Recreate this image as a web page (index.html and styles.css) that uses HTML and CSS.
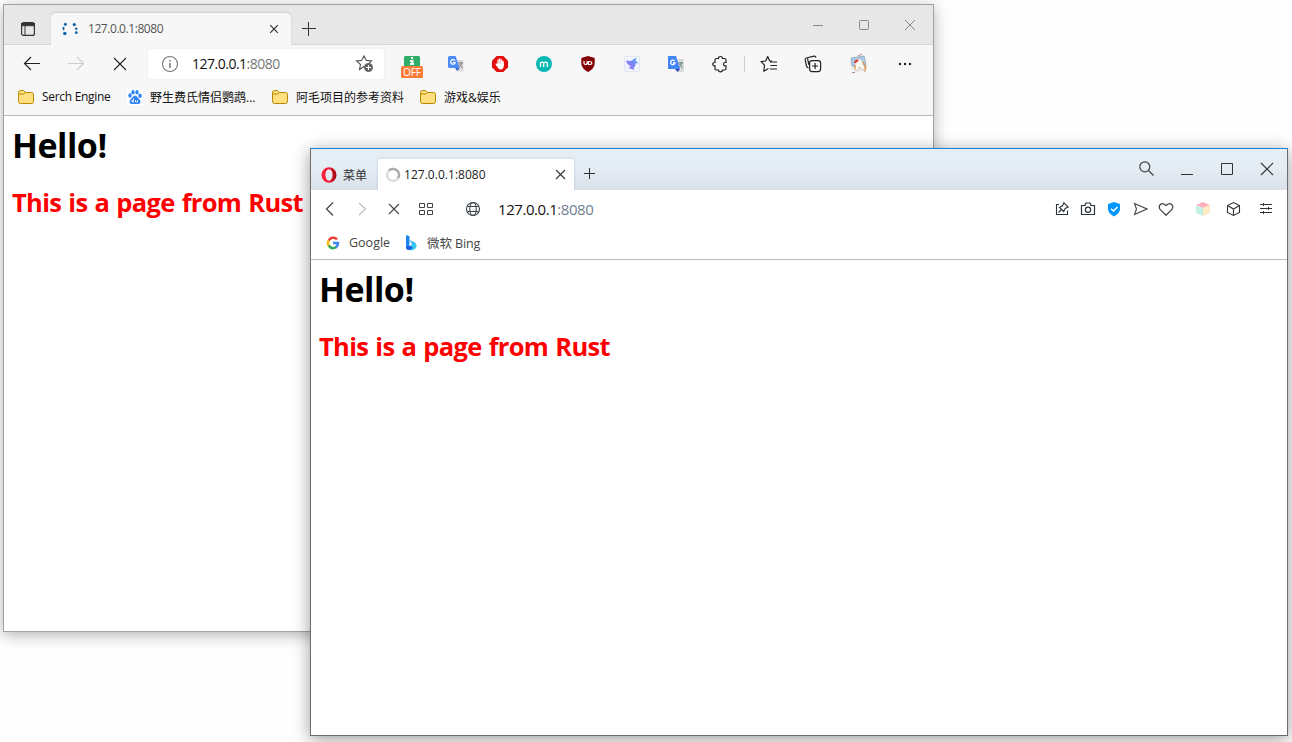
FILE: index.html
```html
<!DOCTYPE html>
<html lang="zh-CN">
<head>
<meta charset="utf-8">
<title>127.0.0.1:8080</title>
<link rel="stylesheet" href="styles.css">
</head>
<body>
<main class="desktop">
<section class="window edge">
  <header class="edge-title">
    <svg class="edge-panel" width="16" height="16" viewBox="0 0 16 16"><rect x="1.6" y="1.6" width="12.8" height="12.8" rx="2" fill="none" stroke="#333" stroke-width="1.2"/><path d="M1.500 2.500h13v2.200h-13z" fill="#333" stroke="#333"/><path d="M5 5v9" stroke="#333"/></svg>
    <div class="edge-tab">
      <svg width="18" height="16" viewBox="0 0 18 16" fill="#1264a8"><circle cx="4.400" cy="3.300" r="1.500"/><path d="M1.200 6.200l2.200-.5v3.200l-1.200.6z"/><circle cx="3.800" cy="12.500" r="1.700"/><circle cx="13.300" cy="3.600" r="1.600"/><circle cx="15.300" cy="7.700" r="1.200"/><circle cx="15.300" cy="11.700" r="1.400"/></svg>
      <span class="tab-text">127.0.0.1:8080</span>
      <svg class="push" width="10" height="10" viewBox="0 0 10 10"><path d="M1.200 1.200l7.600 7.600M8.800 1.200L1.200 8.800" stroke="#333" stroke-width="1.200"/></svg>
    </div>
    <svg class="edge-plus" width="14" height="14" viewBox="0 0 14 14"><path d="M6.500 0v14M0 6.500h14" stroke="#333"/></svg>
    <div class="edge-controls">
      <svg width="12" height="12" viewBox="0 0 12 12"><path d="M1 6.500h10" stroke="#888"/></svg>
      <svg width="12" height="12" viewBox="0 0 12 12"><rect x="1.500" y="1.500" width="9" height="9" rx="1" fill="none" stroke="#888"/></svg>
      <svg width="12" height="12" viewBox="0 0 12 12"><path d="M1 1l10 10M11 1l-10 10" stroke="#888"/></svg>
    </div>
  </header>
  <nav class="edge-bar">
    <span class="cell"><svg width="18" height="16" viewBox="0 0 18 16" fill="none" stroke="#222" stroke-width="1.200"><path d="M8 1L1.500 7.500 8 14M1.500 7.500H17"/></svg></span>
    <span class="cell"><svg width="18" height="16" viewBox="0 0 18 16" fill="none" stroke="#ccc" stroke-width="1.100"><path d="M10 1l6.500 6.500L10 14M16.500 7.500H1"/></svg></span>
    <span class="cell"><svg width="14" height="14" viewBox="0 0 14 14"><path d="M1 1l12 12M13 1L1 13" stroke="#222" stroke-width="1.100"/></svg></span>
    <div class="edge-address">
      <svg width="18" height="18" viewBox="0 0 18 18"><circle cx="9" cy="9" r="7.500" fill="none" stroke="#777" stroke-width="1.100"/><path d="M9 8v5M9 5v1.600" stroke="#777" stroke-width="1.500"/></svg>
      <span class="url">127.0.0.1<span class="port">:8080</span></span>
      <svg class="push" width="20" height="20" viewBox="0 0 20 20"><path d="M10 13l-1-.5-4.500 3 1-5-4-3.500 5-.6L9 2l2.300 4.400 5.200.6-2.500 2.300" fill="none" stroke="#555" stroke-width="1.100"/><circle cx="13.500" cy="13.500" r="4.500" fill="#666"/><path d="M13.500 11v5M11 13.500h5" stroke="#fff"/></svg>
    </div>
    <span class="cell first-ext"><svg width="24" height="24" viewBox="0 0 24 24"><rect x="4" y="4" width="16" height="14" rx="1.500" fill="#2fac66"/><path d="M12 5v2M10 9h2.500v3M10 12h4" stroke="#fff" stroke-width="2" fill="none"/><rect x="1" y="14" width="22" height="12" rx="1.500" fill="#ff7b3a"/><text class="off-label" x="3" y="23.700" textLength="18">OFF</text></svg></span>
    <span class="cell google-tr"><svg width="16" height="16" viewBox="0 0 16 16"><path d="M7 4h8.500v11.500H9z" fill="#dadada"/><path d="M1.500 0h6l4.200 12H1.500Q0 12 0 10.500v-9Q0 0 1.500 0z" fill="#4c8bf5"/><path d="M7 12h4.700L9 15z" fill="#3367d6"/><path d="M7 4.800A2.300 2.300 0 1 0 7.200 6.500H5" fill="none" stroke="#fff" stroke-width="1.200"/><path d="M10 7h5M12.500 6v1M14 7c-.5 2-2 3.500-3 4M11.500 8l3 4" fill="none" stroke="#778" stroke-width=".9"/></svg></span>
    <span class="cell"><svg width="16" height="16" viewBox="0 0 16 16"><path d="M4.700 0h6.600L16 4.700v6.600L11.300 16H4.700L0 11.300V4.700z" fill="#e40d0d"/><path d="M6.100 9V4M7.800 8V3M9.500 8V4M11.100 9V5.500M5 9.500L4.200 8" stroke="#fff" stroke-width="1.400" stroke-linecap="round"/><path d="M5.400 7.500h6.300v3q-.5 3-3 3t-4-4z" fill="#fff"/></svg></span>
    <span class="cell"><svg width="16" height="16" viewBox="0 0 16 16"><circle cx="8" cy="8" r="8" fill="#08b8b4"/><path d="M4.500 11V6M4.500 7q1.700-1.700 3.200 0v4M7.700 7q2-1.700 3.600 0v4" fill="none" stroke="#fff" stroke-width="1.300"/></svg></span>
    <span class="cell"><svg width="16" height="16" viewBox="0 0 16 16"><path d="M8 0l6.700 2v5c0 4-2.700 7-6.700 9-4-2-6.700-5-6.700-9V2z" fill="#850007"/><path d="M4 5v2.500q1.500 2 3.200 0V5M8.500 5.500h1q2.300 0 2.300 1.500t-2.300 1.500h-1z" fill="none" stroke="#fff" stroke-width="1.200"/></svg></span>
    <span class="cell"><svg width="16" height="16" viewBox="0 0 16 16"><defs><linearGradient id="bird" x1="0" x2="1" y1="1" y2="0"><stop stop-color="#a66cf5"/><stop offset="1" stop-color="#4ba2f6"/></linearGradient></defs><rect x=".5" y=".5" width="15" height="15" rx="1" fill="#f1f4fb" stroke="#e0e5f1"/><path d="M2 4.500l5 .5q2-1.500 5.500-3.500L11.500 5l3 2-3 .5q.5 2.500-2 4.500l1 2-6-2 2.500-2Q3 9 2 4.500z" fill="url(#bird)"/></svg></span>
    <span class="cell"><svg width="16" height="16" viewBox="0 0 16 16"><path d="M7 3h9v13h-6z" fill="#dadada"/><path d="M0 0h8l4 13H0z" fill="#4285f4"/><path d="M7 13h5l-2.500 3z" fill="#3040b8"/><path d="M6.600 5A2.200 2.200 0 1 0 7 7H5" fill="none" stroke="#fff" stroke-width="1.300"/><path d="M10 7h5M12.500 6v1M14 7c-.5 2-2 3.500-3 4M11.500 8l3 4" fill="none" stroke="#607d8b"/></svg></span>
    <span class="cell"><svg width="16" height="18" viewBox="0 0 16 18"><path d="M4.500 3.500h2Q6.500 1.500 8.500 1.500t2 2h2q1.500 0 1.500 1.500v2.500h-1q-1.500 0-1.500 1.700t1.500 1.700h1v2.600q0 1.500-1.500 1.500h-2q0 1.800-2 1.800t-2-1.800h-2Q3 15 3 13.500v-2.600Q.8 10.900.8 9.200T3 7.500V5q0-1.500 1.500-1.500z" fill="none" stroke="#222" stroke-width="1.200"/></svg></span>
    <span class="separator"></span>
    <span class="cell after-separator"><svg width="18" height="18" viewBox="0 0 18 18"><path d="M12 6.200L9.700 6 7.700 1.500 5.700 6 1 6.700l3.500 3.500-.7 6L8.500 13.500M10 7h7M10.500 10.500H17M10 14h7" fill="none" stroke="#222" stroke-width="1.200" stroke-linejoin="round"/></svg></span>
    <span class="cell"><svg width="18" height="18" viewBox="0 0 18 18" fill="none" stroke="#222" stroke-width="1.200"><path d="M4.500 13Q3 12.500 2.500 11L1.200 5q-.3-1.700 1-2L10 1.200q1.700-.3 2 1.500M3.500 3.500L5 10"/><rect x="5.600" y="5.600" width="11" height="11" rx="2.500"/><path d="M11.100 8v6M8.100 11h6"/></svg></span>
    <span class="cell spaced"><svg width="20" height="20" viewBox="0 0 20 20"><circle cx="9.500" cy="9.500" r="9.500" fill="#f0f0ef"/><path d="M2 4l13-2 2 10-3 2-11-2z" fill="#a7cbea" stroke="#7c93a8" stroke-width=".6"/><path d="M6 16V9q1-5 5-4 3 1 2.500 4l3 6-4 1-2-3-2 4z" fill="#f9f5ef" stroke="#aaa099" stroke-width=".5"/><path d="M5 9q1-5 5-3L7 9z" fill="#dd3931"/><path d="M14 8l3 6-2 2M6 11v4" fill="none" stroke="#e79b4a" stroke-width="1.300"/><path d="M3 18.500h3M15 17h2M9 2l4-2" stroke="#b58c80"/></svg></span>
    <span class="cell spaced"><svg width="14" height="4" viewBox="0 0 14 4" fill="#222"><circle cx="2" cy="2" r="1.200"/><circle cx="7" cy="2" r="1.200"/><circle cx="12" cy="2" r="1.200"/></svg></span>
  </nav>
  <div class="edge-bookmarks">
    <svg class="folder" width="16" height="14" viewBox="0 0 16 14"><path d="M.5 11.500v-9q0-2 2-2h3l2 2h6q2 0 2 2v7q0 2-2 2h-11q-2 0-2-2z" fill="#ffdf80" stroke="#b78900"/><path d="M.5 4h5l2-1.500" fill="none" stroke="#b78900"/></svg>
    <span class="bm bm-search">Serch Engine</span>
    <svg class="paw" width="16" height="16" viewBox="0 0 16 16" fill="#2d82f7"><rect width="16" height="16" fill="#fff"/><ellipse cx="3" cy="6.500" rx="1.700" ry="2.200"/><ellipse cx="6" cy="3.300" rx="1.600" ry="2.200"/><ellipse cx="10" cy="3.300" rx="1.600" ry="2.200"/><ellipse cx="13" cy="6.800" rx="1.700" ry="2.200"/><path d="M8 6.500q2 0 3 2.500l2 2q1.500 4-2 4H5q-3.500 0-2-4l2-2q1-2.500 3-2.500z"/><path d="M6.500 9.500v3.500H5q-1-1.500 1.500-2M8.500 11v2h2v-2" fill="none" stroke="#fff" stroke-width=".8"/></svg>
    <span class="bm bm-baidu">野生费氏情侣鹦鹉...</span>
    <svg class="folder" width="16" height="14" viewBox="0 0 16 14"><path d="M.5 11.500v-9q0-2 2-2h3l2 2h6q2 0 2 2v7q0 2-2 2h-11q-2 0-2-2z" fill="#ffdf80" stroke="#b78900"/><path d="M.5 4h5l2-1.500" fill="none" stroke="#b78900"/></svg>
    <span class="bm bm-project">阿毛项目的参考资料</span>
    <svg class="folder" width="16" height="14" viewBox="0 0 16 14"><path d="M.5 11.500v-9q0-2 2-2h3l2 2h6q2 0 2 2v7q0 2-2 2h-11q-2 0-2-2z" fill="#ffdf80" stroke="#b78900"/><path d="M.5 4h5l2-1.500" fill="none" stroke="#b78900"/></svg>
    <span class="bm">游戏&amp;娱乐</span>
  </div>
  <article class="page"><h1>Hello!</h1><h2>This is a page from Rust</h2></article>
</section>

<section class="window opera">
  <header class="opera-title">
    <div class="opera-menu"><svg width="16" height="16" viewBox="0 0 16 16"><defs><linearGradient id="op"><stop stop-color="#ff2038"/><stop offset=".5" stop-color="#f01c35"/><stop offset="1" stop-color="#a00014"/></linearGradient></defs><path fill="url(#op)" fill-rule="evenodd" d="M8 .3a7.500 7.700 0 1 1 0 15.400A7.500 7.700 0 0 1 8 .3zM8 2.300C3.200 2.300 3.200 13.700 8 13.700S12.800 2.300 8 2.300z"/></svg><span>菜单</span></div>
    <div class="opera-tab">
      <svg width="16" height="16" viewBox="0 0 16 16" fill="none" stroke-width="2.400"><circle cx="8" cy="8" r="6" stroke="#ddd"/><path d="M4 3.500a6 6 0 0 1 9.200 7.500" stroke="#aaa"/></svg>
      <span class="tab-text">127.0.0.1:8080</span>
      <svg class="push" width="11" height="11" viewBox="0 0 11 11"><path d="M1 1l9 9M10 1l-9 9" stroke="#333" stroke-width="1.100"/></svg>
    </div>
    <svg class="opera-plus" width="12" height="12" viewBox="0 0 12 12"><path d="M6.500 1v11M1 6.500h11" stroke="#333"/></svg>
    <div class="opera-controls">
      <svg width="16" height="16" viewBox="0 0 16 16" fill="none" stroke="#444" stroke-width="1.200"><circle cx="6.800" cy="5.800" r="5"/><path d="M10.500 9.500l5 5"/></svg>
      <svg width="14" height="16" viewBox="0 0 14 16"><path d="M1 13.500h12" stroke="#333"/></svg>
      <svg width="14" height="14" viewBox="0 0 14 14"><path d="M1.500 1.500h11v11h-11z" fill="none" stroke="#333"/></svg>
      <svg width="14" height="14" viewBox="0 0 14 14"><path d="M1 1l12 12M13 1L1 13" stroke="#333" stroke-width="1.100"/></svg>
    </div>
  </header>
  <nav class="opera-bar">
    <div class="opera-nav">
      <svg width="14" height="16" viewBox="0 0 14 16" fill="none" stroke="#444" stroke-width="1.200"><path d="M10 1.500L3.500 8l6.500 6.500"/></svg>
      <svg width="14" height="16" viewBox="0 0 14 16" fill="none" stroke="#bbb" stroke-width="1.100"><path d="M4 2l6.500 6L4 14"/></svg>
      <svg width="14" height="16" viewBox="0 0 14 16"><path d="M2 3l10 10M12 3L2 13" stroke="#444" stroke-width="1.100"/></svg>
      <svg width="14" height="16" viewBox="0 0 14 16" fill="none" stroke="#444"><path d="M.5 2.500h5v4h-5zM8.500 2.500h5v4h-5zM.5 9.500h5v4h-5zM8.500 9.500h5v4h-5z"/></svg>
    </div>
    <svg width="16" height="16" viewBox="0 0 16 16" fill="none" stroke="#37424a" stroke-width="1.100"><circle cx="8" cy="8" r="6.500"/><ellipse cx="8" cy="8" rx="3.200" ry="6.400"/><path d="M2.500 5.500h11M2.500 10.500h11"/></svg>
    <span class="opera-url">127.0.0.1<span class="opera-port">:8080</span></span>
    <div class="opera-tools">
      <svg width="16" height="16" viewBox="0 0 16 16" fill="none" stroke="#29333b" stroke-width="1.100"><path d="M5 3.500H2.500v10h11v-4M4.500 11.500L8 8M10 1.800l4.200 4.200-3 1.500-1.500 3-4.200-4.200 3-1.500z"/></svg>
      <svg width="16" height="16" viewBox="0 0 16 16" fill="none" stroke="#29333b" stroke-width="1.200"><path d="M1.500 4.500H5l1-2.500h4l1 2.500h3.500v9h-13z"/><circle cx="8" cy="8.700" r="2.600"/></svg>
      <svg width="16" height="16" viewBox="0 0 16 16"><path d="M8 1l6 2v5q0 4-6 7.500Q2 12 2 8V3z" fill="#0096ff"/><path d="M5 7.700L7.400 10 11.500 6" fill="none" stroke="#fff" stroke-width="1.500"/></svg>
      <svg width="16" height="16" viewBox="0 0 16 16" fill="none" stroke="#444" stroke-width="1.100"><path d="M2.500 2.500L15 8 2.500 13.500 4.500 8z"/></svg>
      <svg width="16" height="16" viewBox="0 0 16 16" fill="none" stroke="#444" stroke-width="1.200"><path d="M8 14.300L2.300 8.700C-.3 5 3 0 8 4.500c5-4.500 8.300.5 5.700 4.200z"/></svg>
      <svg width="16" height="16" viewBox="0 0 16 16"><path d="M8 1l7 3-7 3-7-3z" fill="#ffb0b9"/><path d="M1 4l7 3v8l-7-3z" fill="#c6efe3"/><path d="M15 4L8 7v8l7-3z" fill="#ffebc3"/></svg>
      <svg width="16" height="16" viewBox="0 0 16 16" fill="none" stroke="#333" stroke-width="1.100"><path d="M8.500 1.500l6 3v7l-6 3-6-3v-7zM2.500 4.500l6 3.500 6-3.500M8.500 8v6.500"/></svg>
      <svg width="14" height="16" viewBox="0 0 14 16" fill="none" stroke="#333"><path d="M1 3.500h12M1 7.500h12M1 11.500h12M4.500 2v3M9.500 6v3M4.500 10v3"/></svg>
    </div>
  </nav>
  <div class="opera-bookmarks">
    <svg width="14" height="14" viewBox="0 0 14 14" fill="none" stroke-width="2.500"><path d="M11 3.500A5 5 0 0 0 2.700 4.500" stroke="#ea4335"/><path d="M2.700 4.500a5 5 0 0 0 0 5" stroke="#fbbc05"/><path d="M2.700 9.500q3 4.500 7.800 1.500" stroke="#34a853"/><path d="M7 7h5q0 2.600-2 4.300" stroke="#4285f4"/></svg>
    <span class="bm-google">Google</span>
    <svg width="12" height="16" viewBox="0 0 12 16"><defs><linearGradient id="bing" x2="1" y2="1"><stop stop-color="#39a5f4"/><stop offset="1" stop-color="#35d5e8"/></linearGradient></defs><path d="M1 0l3.500 1.300V10L1 13z" fill="#1b87ec"/><path d="M5 5l5 2.500q3 3 .5 6Q6.500 17 2.500 14L1 12l6-2z" fill="url(#bing)"/><path d="M1 12l3-1.500 4 2Q4 17 1 13.500z" fill="#1a5fe2"/></svg>
    <span class="bm-bing">微软 Bing</span>
  </div>
  <article class="page"><h1>Hello!</h1><h2>This is a page from Rust</h2></article>
</section>
</main>
</body>
</html>
```

FILE: styles.css
```css
* { box-sizing: border-box; }
body { margin: 0; font-family: "Open Sans", "Noto Sans CJK SC", sans-serif; background: #fefefe; }
svg { display: block; flex: none; }
.desktop { position: relative; width: 1292px; height: 742px; overflow: hidden; }
.window { position: absolute; display: flex; flex-direction: column; background: #fff; white-space: nowrap; }
.push { margin-left: auto; }

.edge { left: 3px; top: 4px; width: 931px; height: 628px; border: 1px solid #a2a2a2; box-shadow: 0 3px 14px rgba(0, 0, 0, .3); }
.edge-title { height: 40px; flex: none; display: flex; background: #e7e7e7; border-bottom: 1px solid #d6d6d6; }
.edge-panel { margin: 16px 0 0 16px; }
.edge-tab { display: flex; align-items: center; width: 240px; height: 32px; margin: 8px 0 0 15px; padding: 0 12px 1px 10px; background: #f7f7f7; border-radius: 5px 5px 0 0; box-shadow: 0 -1px 2px rgba(0, 0, 0, .12); }
.edge-tab .tab-text { margin: 0 0 1px 9px; color: #555; letter-spacing: -.44px; }
.tab-text { font-size: 12px; }
.edge-plus { margin: 17px 0 0 11px; }
.edge-controls { display: flex; gap: 34px; margin: 14px 17px 0 auto; }

.edge-bar { height: 38px; flex: none; display: flex; align-items: center; padding-left: 6px; background: #f7f7f7; }
.cell { width: 44px; height: 38px; flex: none; display: flex; align-items: center; justify-content: center; }
.cell svg { overflow: visible; }
.google-tr svg { margin-right: 1px; }
.edge-address { display: flex; align-items: center; width: 236px; height: 30px; margin-left: 6px; padding: 0 9px 0 13px; background: #fff; border-radius: 4px; box-shadow: 0 0 3px rgba(0, 0, 0, .07); }
.url { margin: 0 0 1px 13px; font-size: 14px; letter-spacing: -.5px; color: #111; }
.port { color: #777; }
.first-ext { margin-left: 6px; }
.off-label { font-size: 10px; fill: #fff; }
.separator { width: 1px; height: 16px; margin-left: 2px; background: #ccc; }
.after-separator { margin-left: 2px; }
.spaced { margin-left: 2px; }

.edge-bookmarks { height: 33px; flex: none; display: flex; align-items: center; padding: 0 0 4px 14px; background: #f7f7f7; border-bottom: 1px solid #b9b9b9; font-size: 12px; color: #111; }
.bm { margin: 0 0 1px 8px; }
.bm-search { width: 85px; letter-spacing: -.3px; }
.bm-baidu { width: 122px; margin-left: 7px; }
.bm-project { width: 124px; }

.page { padding: 0 8px; }
h1, h2 { margin: 0; font-weight: 700; }
h1 { margin-top: -1px; font-size: 34px; line-height: 60px; letter-spacing: -.5px; }
h2 { font-size: 25.500px; line-height: 54px; color: #f00; letter-spacing: -.7px; word-spacing: 1.200px; }

.opera { left: 310px; top: 148px; width: 978px; height: 588px; border: 1px solid #6d6d6d; border-top-color: #1883d7; box-shadow: 0 3px 16px rgba(0, 0, 0, .4); }
.opera-title { height: 41px; flex: none; display: flex; background: linear-gradient(#e5edf5 40%, #dae1e9); }
.opera-menu { display: flex; align-items: center; gap: 6px; width: 67px; padding: 10px 0 0 10px; font-size: 12px; color: #333; }
.opera-tab { display: flex; align-items: center; width: 196px; height: 31px; margin-top: 10px; padding: 0 8px 0 7px; background: #fff; box-shadow: 0 0 3px rgba(70, 90, 120, .2); }
.opera-tab .tab-text { margin-left: 3px; color: #222; letter-spacing: .03px; }
.opera-plus { margin: 18px 0 0 9px; }
.opera-controls { display: flex; align-items: center; margin: 0 13px 2px auto; }
.opera-controls svg + svg { margin-left: 26px; }
.opera-bar { height: 38px; flex: none; display: flex; align-items: center; padding-left: 12px; background: #fff; z-index: 1; }
.opera-nav { display: flex; gap: 18px; margin-right: 32px; }
.opera-url { margin-left: 17px; font-size: 15px; letter-spacing: -.44px; color: #111; }
.opera-port { color: #718090; }
.opera-tools { display: flex; gap: 10px; margin: 0 14px 0 auto; }
.opera-tools svg:nth-child(6) { margin-left: 11px; }
.opera-tools svg:nth-child(7) { margin-left: 4px; }
.opera-tools svg:nth-child(8) { margin-left: 8px; }
.opera-bookmarks { height: 32px; flex: none; display: flex; align-items: center; padding: 0 0 1px 15px; border-bottom: 1px solid #b5bfc9; font-size: 12.500px; color: #444; }
.bm-google { width: 56px; margin: 0 0 1px 9px; }
.bm-bing { margin: 0 0 2px 10px; letter-spacing: -.1px; }
```
